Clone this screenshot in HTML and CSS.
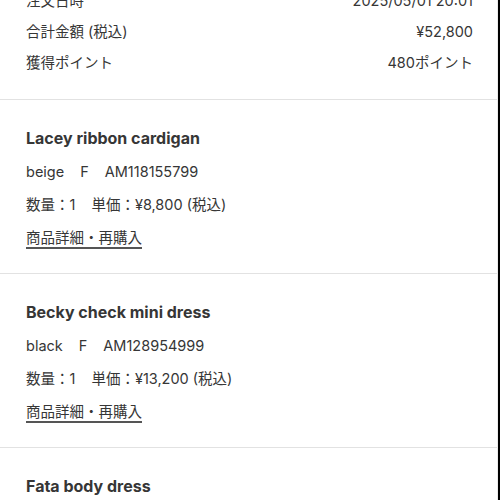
FILE: index.html
```html
<!DOCTYPE html>
<html lang="ja">
<head>
    <meta charset="UTF-8">
    <title>注文詳細</title>
    <link rel="stylesheet" href="styles.css">
</head>
<body>
    <div class="page">
        <div class="summary">
            <div class="summary-row">
                <span>注文日時</span>
                <span>2025/05/01 20:01</span>
            </div>
            <div class="summary-row">
                <span>合計金額 (税込)</span>
                <span>¥52,800</span>
            </div>
            <div class="summary-row">
                <span>獲得ポイント</span>
                <span>480ポイント</span>
            </div>
        </div>

        <div class="item">
            <div class="item-name">Lacey ribbon cardigan</div>
            <div class="item-line">
                <span class="spec">beige</span>
                <span class="spec">F</span>
                <span class="spec">AM118155799</span>
            </div>
            <div class="item-line">
                <span class="spec">数量：1</span>
                <span class="spec">単価：¥8,800 (税込)</span>
            </div>
            <div class="item-line">
                <a class="item-link" href="#">商品詳細・再購入</a>
            </div>
        </div>

        <div class="item">
            <div class="item-name">Becky check mini dress</div>
            <div class="item-line">
                <span class="spec">black</span>
                <span class="spec">F</span>
                <span class="spec">AM128954999</span>
            </div>
            <div class="item-line">
                <span class="spec">数量：1</span>
                <span class="spec">単価：¥13,200 (税込)</span>
            </div>
            <div class="item-line">
                <a class="item-link" href="#">商品詳細・再購入</a>
            </div>
        </div>

        <div class="item">
            <div class="item-name">Fata body dress</div>
        </div>
    </div>
</body>
</html>
```

FILE: styles.css
```css
body {
    background-color: #000;
    color: #363636;
    font-family: Inter, "Noto Sans CJK JP", sans-serif;
    font-size: 14.5px;
    margin: 0;
    padding: 0;
    height: 500px;
    overflow: hidden;
}

.page {
    width: 497px;
    height: 500px;
    background-color: #fff;
    border-right: 1px solid #ececec;
    overflow: hidden;
}

.summary {
    margin-top: -15px;
    padding: 0 24px 21px 26px;
}

.summary-row {
    display: flex;
    justify-content: space-between;
    line-height: 31px;
}

.item {
    border-top: 1px solid #e2e2e2;
    padding: 22px 24px 19px 26px;
}

.item-name {
    font-size: 16px;
    font-weight: bold;
    line-height: 33px;
}

.item-line {
    display: flex;
    gap: 16px;
    line-height: 33px;
}

.item-link {
    color: #363636;
    text-decoration: underline;
    text-decoration-color: #555;
    text-decoration-thickness: 1.5px;
    text-underline-offset: 4px;
}
```
